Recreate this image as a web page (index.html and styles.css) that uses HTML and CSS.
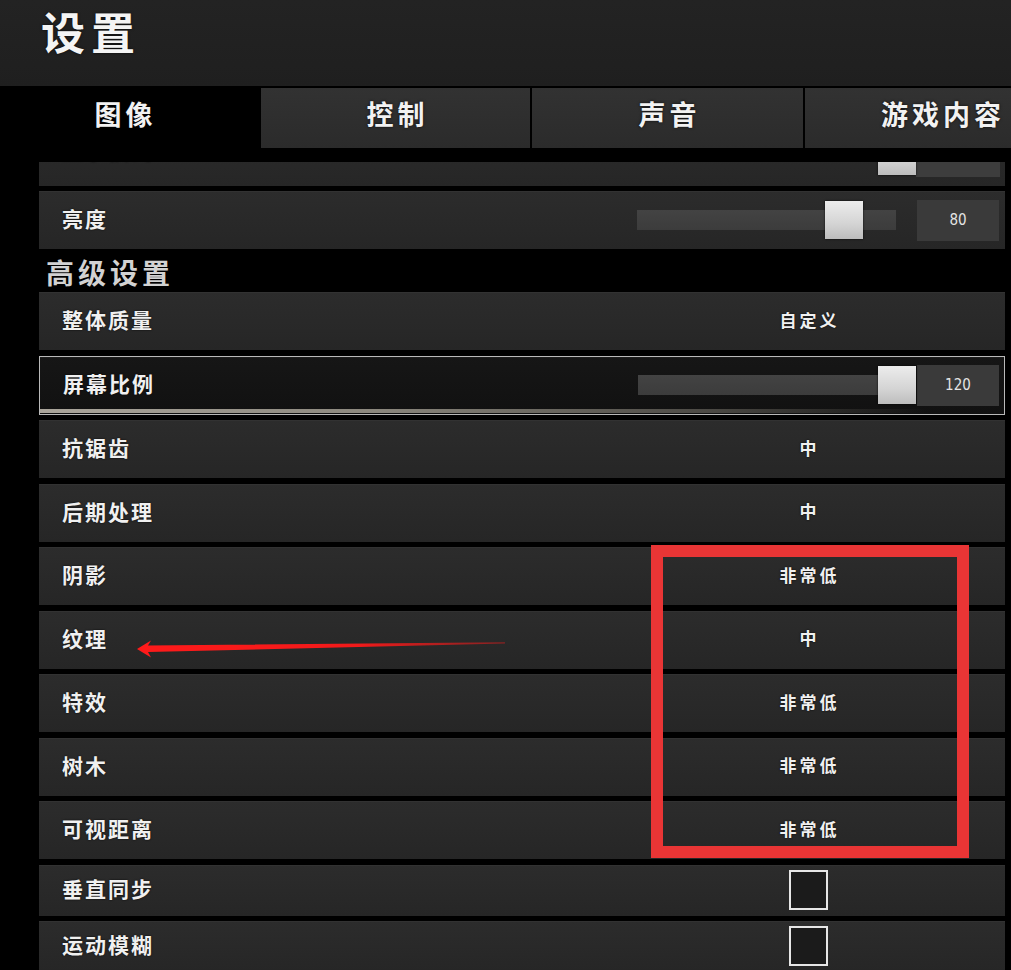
FILE: index.html
```html
<!DOCTYPE html>
<html lang="zh-CN">
<head>
<meta charset="utf-8">
<title>设置</title>
<link rel="stylesheet" href="styles.css">
</head>
<body>
<div class="page">
  <header class="header"><h1 class="title">设置</h1></header>
  <nav class="tabs">
    <div class="tab active">图像</div>
    <div class="tab">控制</div>
    <div class="tab">声音</div>
    <div class="tab">游戏内容</div>
  </nav>
  <main class="content">
    <div class="row row-cut">
      <div class="label label-cut">显示模式</div>
      <div class="mini-slider">
        <div class="mini-track"></div>
        <div class="thumb mini-thumb"></div>
      </div>
    </div>
    <div class="row">
      <div class="label">亮度</div>
      <div class="slider-wrap">
        <div class="slider">
          <div class="track"></div>
          <div class="thumb" style="left: 80%"></div>
        </div>
        <div class="num">80</div>
      </div>
    </div>
    <div class="section">高级设置</div>
    <div class="row"><div class="label">整体质量</div><div class="val">自定义</div></div>
    <div class="row row-focus">
      <div class="label">屏幕比例</div>
      <div class="slider-wrap">
        <div class="slider">
          <div class="track"></div>
          <div class="thumb" style="left: 100%"></div>
        </div>
        <div class="num">120</div>
      </div>
    </div>
    <div class="row"><div class="label">抗锯齿</div><div class="val">中</div></div>
    <div class="row"><div class="label">后期处理</div><div class="val">中</div></div>
    <div class="row"><div class="label">阴影</div><div class="val">非常低</div></div>
    <div class="row"><div class="label">纹理</div><div class="val">中</div></div>
    <div class="row"><div class="label">特效</div><div class="val">非常低</div></div>
    <div class="row"><div class="label">树木</div><div class="val">非常低</div></div>
    <div class="row"><div class="label">可视距离</div><div class="val">非常低</div></div>
    <div class="row row-small"><div class="label">垂直同步</div><div class="val"><span class="check"></span></div></div>
    <div class="row row-small"><div class="label">运动模糊</div><div class="val"><span class="check"></span></div></div>
  </main>
  <div class="mark-box"></div>
  <svg class="mark-arrow" width="1011" height="970" viewBox="0 0 1011 970">
    <defs>
      <linearGradient id="fade" x1="137" y1="0" x2="505" y2="0" gradientUnits="userSpaceOnUse">
        <stop offset="0" stop-color="#ff1a1a"/>
        <stop offset="0.6" stop-color="#f21a1a"/>
        <stop offset="1" stop-color="#c41e1e" stop-opacity="0.6"/>
      </linearGradient>
    </defs>
    <polygon fill="url(#fade)" points="137,649 151,640.5 148,645.5 505,642.3 505,643.4 148,652 151,657.5"/>
  </svg>
</div>
</body>
</html>
```

FILE: styles.css
```css
* { box-sizing: border-box; margin: 0; padding: 0; }

html, body {
  background: #000;
  width: 1011px;
  height: 970px;
  overflow: hidden;
}

body {
  font-family: "Noto Sans CJK SC", "Noto Sans", sans-serif;
  color: #f2f2f2;
}

.page {
  position: relative;
  width: 1011px;
  height: 970px;
  overflow: hidden;
}

.header {
  height: 86px;
  background: linear-gradient(180deg, #232323 0%, #1f1f1f 100%);
  padding-left: 41px;
  padding-top: 5px;
}

.title {
  font-size: 44px;
  font-weight: 700;
  letter-spacing: 6px;
  line-height: 53px;
  color: #f4f4f4;
  text-shadow: 0 0 3px rgba(0,0,0,0.7);
}

.tabs {
  margin-top: 2px;
  height: 60px;
  display: grid;
  grid-template-columns: 259px 269px 271px 272px;
  column-gap: 2px;
  overflow: hidden;
  width: 1011px;
}

.tab {
  background: linear-gradient(180deg, #323232 0%, #2b2b2b 100%);
  display: flex;
  align-items: center;
  justify-content: center;
  font-size: 27px;
  font-weight: 700;
  letter-spacing: 4px;
  padding-left: 4px;
  padding-bottom: 10px;
  color: #f2f2f2;
  text-shadow: 0 0 3px rgba(0,0,0,0.8);
  white-space: nowrap;
}

.tab.active {
  background: #000;
  padding-right: 12px;
}

.content {
  margin-top: 14px;
  height: 808px;
  overflow: hidden;
  padding-left: 39px;
  width: 1005px;
}

.row {
  position: relative;
  height: 58px;
  margin-bottom: 5.5px;
  background: linear-gradient(180deg, #2c2c2c 0%, #262626 100%);
  display: flex;
  align-items: center;
  box-shadow: inset 0 1px 0 rgba(255,255,255,0.03);
}

.row-cut {
  margin-top: -34px;
  margin-bottom: 5px;
}

.row-small {
  height: 51px;
  margin-bottom: 5px;
}

.label {
  padding-left: 23px;
  padding-bottom: 4px;
  font-size: 21px;
  font-weight: 700;
  letter-spacing: 2px;
  color: #f0f0f0;
  text-shadow: 0 0 2px rgba(0,0,0,0.9);
  white-space: nowrap;
}

.label-cut {
  padding-bottom: 14px;
}

.val {
  margin-left: auto;
  width: 394px;
  text-align: center;
  font-size: 17px;
  font-weight: 700;
  letter-spacing: 3px;
  padding-left: 3px;
  padding-bottom: 4px;
  color: #f0f0f0;
  text-shadow: 0 0 2px rgba(0,0,0,0.9);
  display: flex;
  justify-content: center;
  align-items: center;
}

.row-small .val {
  padding-bottom: 0;
}

.section {
  height: 37.5px;
  line-height: 35px;
  padding-left: 7px;
  font-size: 28px;
  font-weight: 700;
  letter-spacing: 4px;
  color: #d2d2d2;
}

.slider-wrap {
  margin-left: auto;
  padding-right: 6px;
  display: flex;
  align-items: center;
  gap: 21px;
}

.slider {
  position: relative;
  width: 259px;
  height: 38px;
  display: flex;
  align-items: center;
}

.track {
  width: 100%;
  height: 20px;
  background: linear-gradient(180deg, #434343 0%, #3c3c3c 100%);
}

.thumb {
  position: absolute;
  top: 0;
  width: 38px;
  height: 38px;
  margin-left: -19px;
  background: linear-gradient(180deg, #ececec 0%, #d4d4d4 60%, #bdbdbd 100%);
  box-shadow: 0 0 2px rgba(0,0,0,0.8);
}

.num {
  width: 82px;
  height: 41px;
  background: #3a3a3a;
  display: flex;
  align-items: center;
  justify-content: center;
  font-family: "DejaVu Sans Condensed", "DejaVu Sans", sans-serif;
  font-size: 15px;
  color: #e4e4e4;
}

.row-focus {
  background: linear-gradient(180deg, #161616 0%, #111 100%);
  border: 1px solid #b9b9b9;
  height: 59px;
}

.row-focus::after {
  content: "";
  position: absolute;
  left: 0;
  right: 0;
  bottom: 1px;
  height: 4px;
  background: linear-gradient(90deg, #aaa59b 0%, #8b877d 35%, #4a4843 70%, rgba(40,40,40,0) 92%);
}

.row-focus .slider-wrap {
  padding-right: 5px;
  gap: 20px;
}

.mini-slider {
  position: absolute;
  left: 839px;
  top: 9px;
  width: 122px;
  height: 40px;
}

.mini-track {
  position: absolute;
  left: 38px;
  top: 20px;
  width: 84px;
  height: 20px;
  background: #3d3d3d;
}

.mini-thumb {
  left: 0;
  margin-left: 0;
  top: 0;
}

.check {
  display: block;
  width: 39px;
  height: 40px;
  border: 2px solid #e6e6e6;
  background: #1b1b1b;
  margin-left: -3px;
}

.mark-box {
  position: absolute;
  left: 651px;
  top: 545px;
  width: 318px;
  height: 313px;
  border: 12px solid #e93535;
}

.mark-arrow {
  position: absolute;
  left: 0;
  top: 0;
  pointer-events: none;
}
```
